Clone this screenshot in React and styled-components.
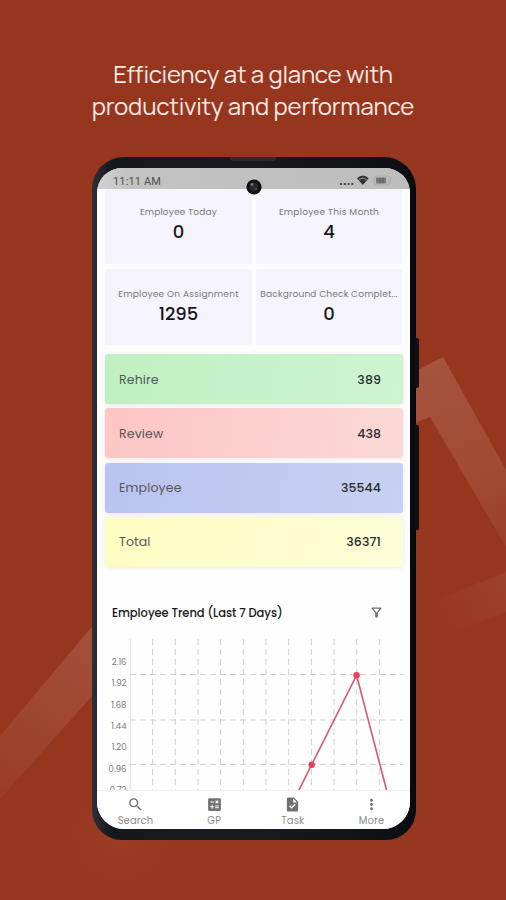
import React from "react";
import styled, { createGlobalStyle } from "styled-components";
import {
  MdSearch,
  MdCalculate,
  MdTask,
  MdMoreVert,
  MdOutlineFilterAlt,
} from "react-icons/md";

const Global = createGlobalStyle`
  * { box-sizing: border-box; }
  body { margin: 0; background: #96361f; }
`;

const geo = `"Poppins", "Lato", "Open Sans", sans-serif`;

const Page = styled.main`
  position: relative;
  width: 506px;
  height: 900px;
  overflow: hidden;
  background: #96361f;
  display: flex;
  flex-direction: column;
  align-items: center;
  font-family: ${geo};
`;

const Backdrop = styled.svg`
  position: absolute;
  inset: 0;
`;

const Headline = styled.h1`
  position: relative;
  margin: 0;
  padding-top: 58px;
  height: 157px;
  display: flex;
  flex-direction: column;
  align-items: center;
  font: 400 24px/32px "Manrope", "Inter", sans-serif;
  color: #fbe9e4;
  white-space: nowrap;
`;

const HeadlineRow = styled.span`
  letter-spacing: ${(p) => p.$track}px;
`;

const Phone = styled.section`
  position: relative;
  width: 324px;
  height: 683px;
  margin-left: 2px;
  padding: 11px 6px 11px 5px;
  border-radius: 32px 32px 30px 30px;
  background: linear-gradient(90deg, #2f2f36, #15181d 6%, #191a20 50%, #0c1014 96%, #08090c);
`;

const SideKey = styled.i`
  position: absolute;
  left: 323px;
  top: ${(p) => p.$top}px;
  width: 4px;
  height: ${(p) => p.$height}px;
  border-radius: 0 2px 2px 0;
  background: #0f0f14;
`;

const Speaker = styled.i`
  position: absolute;
  top: 0;
  left: 138px;
  width: 46px;
  height: 4px;
  border-radius: 0 0 3px 3px;
  background: #2e2a2e;
`;

const Screen = styled.div`
  width: 313px;
  height: 661px;
  overflow: hidden;
  border-radius: 25px 25px 27px 27px;
  background: #fefefe;
  display: flex;
  flex-direction: column;
`;

const StatusBar = styled.header`
  flex: none;
  height: 21px;
  padding: 5px 17px 0 16px;
  display: flex;
  justify-content: space-between;
  background: linear-gradient(90deg, #d2d2d2, #c3c3c3 10%, #bdbdbd);
`;

const Clock = styled.span`
  font: 400 11px/17px "Roboto", sans-serif;
  letter-spacing: 0.15px;
  color: #505050;
`;

const Camera = styled.svg`
  position: absolute;
  left: 153.5px;
  top: 22px;
`;

const StatGrid = styled.div`
  flex: none;
  display: grid;
  grid-template-columns: 147px 146px;
  grid-template-rows: 75px 76px;
  column-gap: 4px;
  row-gap: 5px;
  padding: 0 8px;
  background: #fcfcfd;
`;

const StatCard = styled.article`
  display: flex;
  flex-direction: column;
  align-items: center;
  padding-top: ${(p) => p.$top}px;
  border-radius: 3px;
  background: #f5f4fc;
  white-space: nowrap;
`;

const StatLabel = styled.span`
  font-size: 9px;
  line-height: 14px;
  letter-spacing: ${(p) => p.$track}px;
  color: #77777e;
`;

const StatValue = styled.strong`
  font-size: 18px;
  font-weight: 500;
  line-height: 26px;
  color: #17171b;
`;

const TotalList = styled.div`
  flex: none;
  height: 231px;
  display: flex;
  flex-direction: column;
  gap: 4.3px;
  padding: 9px 7px 0 8px;
  background: linear-gradient(#fcfcfd 88%, #fefefe);
`;

const TotalRow = styled.div`
  flex: none;
  height: 50px;
  padding: 1px 22px 0 14px;
  display: flex;
  align-items: center;
  justify-content: space-between;
  border-radius: 3px;
  background: linear-gradient(100deg, ${(p) => p.$from}, ${(p) => p.$to});
  box-shadow: 0 1px 4px rgba(40, 40, 70, 0.08);
`;

const TotalName = styled.span`
  font-size: 12.5px;
  letter-spacing: 0.15px;
  color: #55565b;
`;

const TotalCount = styled.span`
  font-size: 12.5px;
  font-weight: 500;
  letter-spacing: 0.1px;
  color: #2b2c31;
`;

const TrendHeader = styled.div`
  flex: none;
  height: 63px;
  padding: 29px 26px 0 15px;
  display: flex;
  justify-content: space-between;
  align-items: flex-start;
  color: #6d6d6d;
`;

const TrendTitle = styled.h2`
  margin: 0;
  font-size: 11.5px;
  line-height: 16px;
  font-weight: 500;
  letter-spacing: -0.05px;
  color: #18181b;
`;

const Chart = styled.svg`
  flex: none;
  display: block;
  font: 400 8.5px ${geo};
`;

const NavBar = styled.nav`
  flex: none;
  height: 39px;
  padding: 5px 0 0;
  display: grid;
  grid-template-columns: repeat(4, 78.7px);
  justify-content: center;
  border-top: 1px solid #f1f1f1;
  background: #fff;
`;

const NavItem = styled.a`
  display: flex;
  flex-direction: column;
  align-items: center;
  color: #717171;
`;

const NavLabel = styled.span`
  font-size: 10px;
  line-height: 14px;
  margin-top: 1px;
  letter-spacing: 0.1px;
  color: #8c8c8c;
`;

const stats = [
  { label: "Employee Today", value: "0", top: 16, track: 0.2 },
  { label: "Employee This Month", value: "4", top: 16, track: 0.28 },
  { label: "Employee On Assignment", value: "1295", top: 17.5, track: 0.23 },
  { label: "Background Check Complet...", value: "0", top: 17.5, track: 0.18 },
];

const totals = [
  { name: "Rehire", count: "389", from: "#bff0c0", to: "#cef4d0" },
  { name: "Review", count: "438", from: "#fdc5c4", to: "#fbd9d6" },
  { name: "Employee", count: "35544", from: "#b8c3f0", to: "#c8d1f1" },
  { name: "Total", count: "36371", from: "#fdfdc1", to: "#fdfdd8" },
];

const ticks = ["2.16", "1.92", "1.68", "1.44", "1.20", "0.96", "0.72"];
const columns = Array.from({ length: 11 }, (_, i) => 55.6 + i * 22.68);

const navItems = [
  { label: "Search", Icon: MdSearch },
  { label: "GP", Icon: MdCalculate },
  { label: "Task", Icon: MdTask },
  { label: "More", Icon: MdMoreVert },
];

export default function App() {
  return (
    <Page>
      <Global />
      <Backdrop width="506" height="900" viewBox="0 0 506 900" aria-hidden="true">
        <defs>
          <linearGradient id="rightBand" x1="430" y1="357" x2="506" y2="570" gradientUnits="userSpaceOnUse">
            <stop offset="0" stopColor="#a6543e" />
            <stop offset="0.55" stopColor="#a14a34" />
            <stop offset="1" stopColor="#9a3c25" />
          </linearGradient>
          <linearGradient id="leftBand" x1="92" y1="640" x2="0" y2="790" gradientUnits="userSpaceOnUse">
            <stop offset="0" stopColor="#a34f3a" />
            <stop offset="1" stopColor="#9a3d27" />
          </linearGradient>
          <linearGradient id="lowBand" x1="506" y1="580" x2="440" y2="625" gradientUnits="userSpaceOnUse">
            <stop offset="0" stopColor="#9c412b" />
            <stop offset="1" stopColor="#96361f" />
          </linearGradient>
          <radialGradient id="footGlow" cx="120" cy="835" r="60" gradientUnits="userSpaceOnUse">
            <stop offset="0" stopColor="#9b3c25" />
            <stop offset="1" stopColor="#96361f" />
          </radialGradient>
        </defs>
        <path d="M506 572L416 608V648L506 612Z" fill="url(#lowBand)" />
        <path d="M410 374L443 357L506 470V547L430 417L410 425Z" fill="url(#rightBand)" />
        <path d="M100 617L0 736V799L100 687Z" fill="url(#leftBand)" />
        <circle cx="120" cy="835" r="60" fill="url(#footGlow)" />
      </Backdrop>

      <Headline>
        <HeadlineRow $track={-0.24}>Efficiency at a glance with</HeadlineRow>
        <HeadlineRow $track={-0.18}>productivity and performance</HeadlineRow>
      </Headline>

      <Phone>
        <SideKey $top={181} $height={50} />
        <SideKey $top={268} $height={105} />
        <Speaker />
        <Screen>
          <StatusBar>
            <Clock>11:11 AM</Clock>
            <svg width="54" height="14" viewBox="0 0 54 14">
              <g fill="#4a4a4a">
                <rect x="1" y="10" width="2" height="2" />
                <rect x="4.8" y="10" width="2" height="2" />
                <rect x="8.6" y="10" width="2" height="2" />
                <rect x="12.4" y="10" width="2" height="2" />
              </g>
              <path d="M18 5.2Q23.8 0 29.6 5.2L23.8 12Z" fill="#333" />
              <path d="M20.2 6.4Q23.8 3.6 27.4 6.4" fill="none" stroke="#a9a9a9" strokeWidth=".9" />
              <rect x="35" y="3" width="16.5" height="9" rx="3" fill="#b9b9b9" stroke="#a9a9a9" strokeWidth=".8" />
              <rect x="37" y="4.5" width="10" height="6" rx="1" fill="#797979" />
              <path d="M41 5V10M43.8 5V10" stroke="#5d5d5d" />
            </svg>
          </StatusBar>

          <StatGrid>
            {stats.map((s) => (
              <StatCard key={s.label} $top={s.top}>
                <StatLabel $track={s.track}>{s.label}</StatLabel>
                <StatValue>{s.value}</StatValue>
              </StatCard>
            ))}
          </StatGrid>

          <TotalList>
            {totals.map((t) => (
              <TotalRow key={t.name} $from={t.from} $to={t.to}>
                <TotalName>{t.name}</TotalName>
                <TotalCount>{t.count}</TotalCount>
              </TotalRow>
            ))}
          </TotalList>

          <TrendHeader>
            <TrendTitle>Employee Trend (Last 7 Days)</TrendTitle>
            <MdOutlineFilterAlt size={15} />
          </TrendHeader>

          <Chart width="313" height="151" viewBox="0 0 313 151">
            <path d="M33.2 0V151" stroke="#dcdcdc" />
            <g stroke="#cfcfcf" strokeDasharray="6 4">
              {columns.map((x) => (
                <path key={x} d={`M${x} 0V151`} />
              ))}
              {[35.5, 81, 125.5].map((y) => (
                <path key={y} d={`M33 ${y}H306`} />
              ))}
            </g>
            <g fill="#777" textAnchor="end">
              {ticks.map((t, i) => (
                <text key={t} x="29.5" y={26 + i * 21.3}>{t}</text>
              ))}
            </g>
            <path d="M200.5 154L214.7 125.7L259.6 36.2L290.3 154" fill="none" stroke="#d9566a" strokeWidth="1.6" />
            <circle cx="214.7" cy="125.7" r="3.2" fill="#e8405c" />
            <circle cx="259.6" cy="36.2" r="3.2" fill="#e8405c" />
          </Chart>

          <NavBar>
            {navItems.map(({ label, Icon }) => (
              <NavItem key={label}>
                <Icon size={17} />
                <NavLabel>{label}</NavLabel>
              </NavItem>
            ))}
          </NavBar>
        </Screen>
        <Camera width="16" height="16" viewBox="0 0 16 16">
          <circle cx="8" cy="8" r="7.6" fill="#101013" />
          <circle cx="8" cy="8" r="4.5" fill="#26272c" />
          <circle cx="6" cy="5.5" r="1.4" fill="#77797f" />
          <circle cx="10" cy="9.8" r="1" fill="#55575e" />
        </Camera>
      </Phone>
    </Page>
  );
}
